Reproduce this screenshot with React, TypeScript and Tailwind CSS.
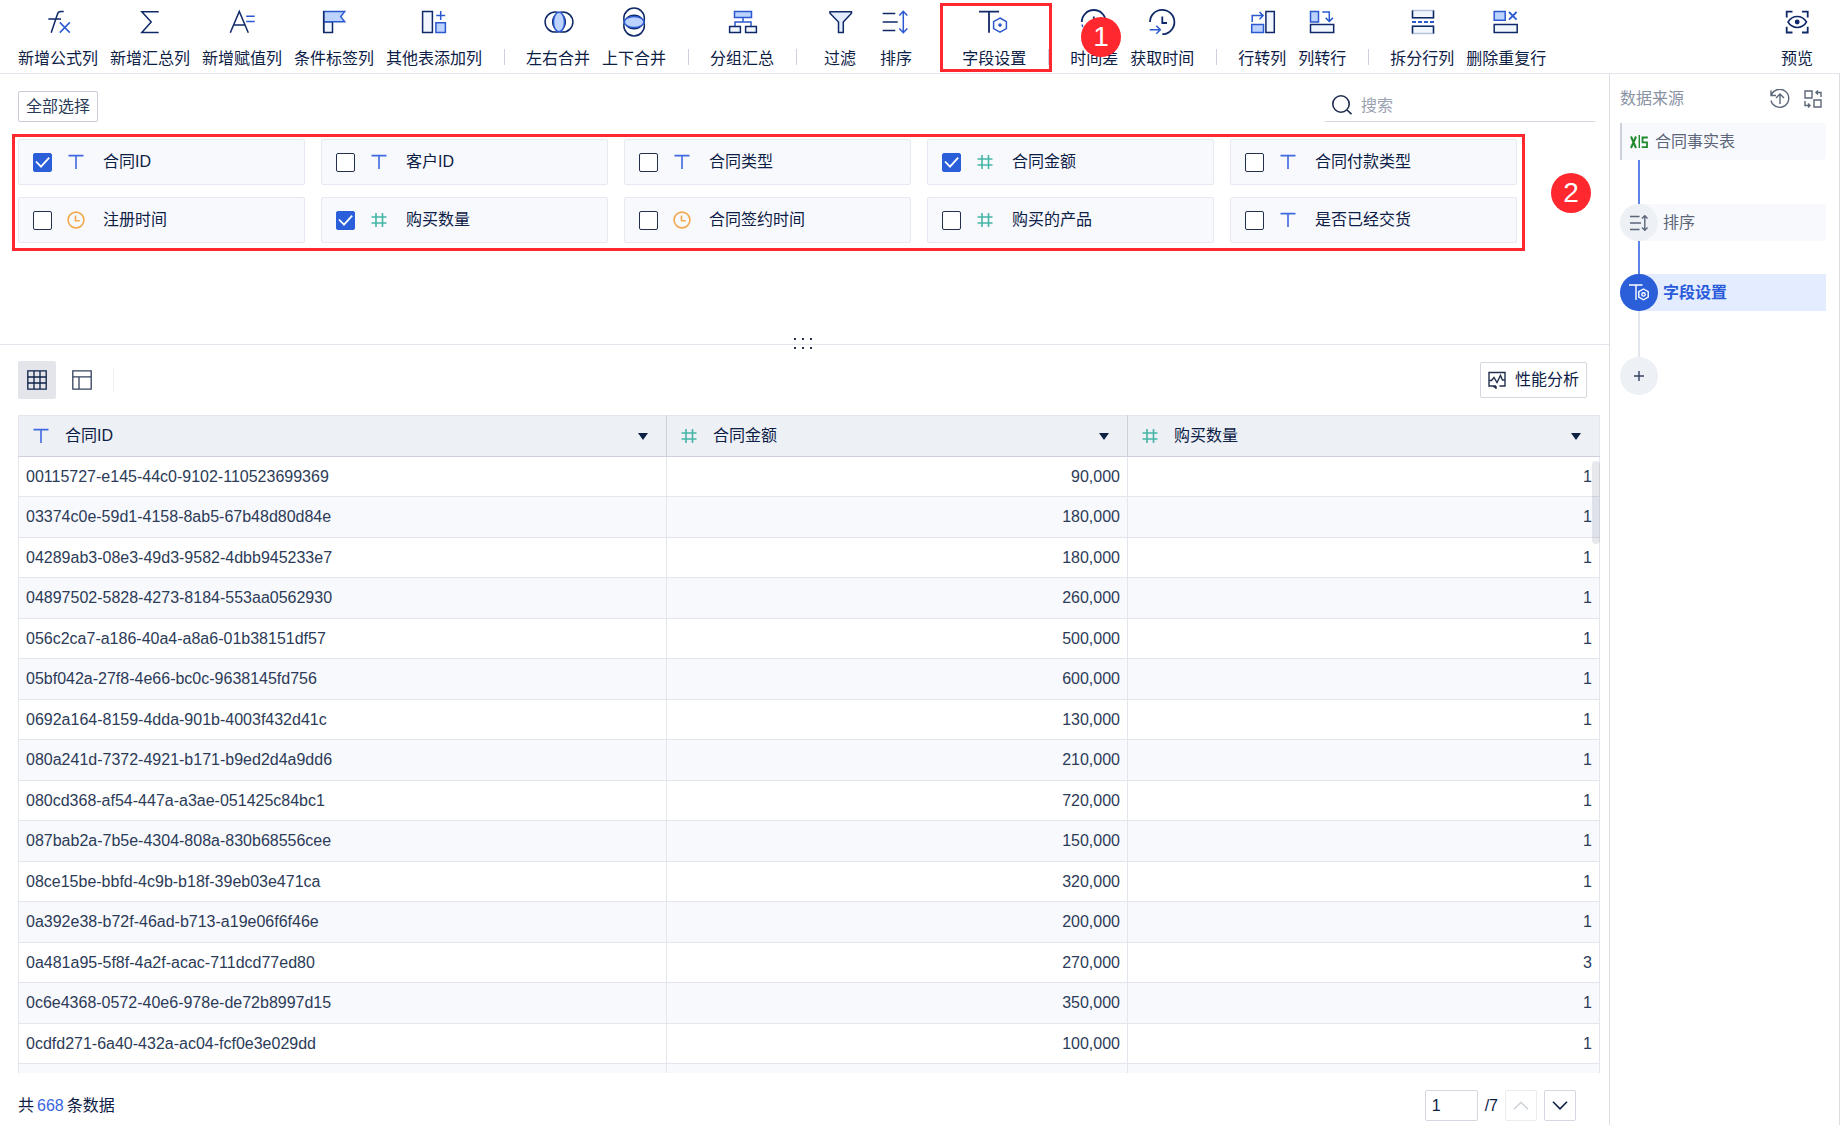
import { useState, type ReactNode } from "react";

const NAVY = "#0f2868";
const BLUE = "#2b59cf";
const SKY = "#bcd2ff";
const PALE = "#f1f6ff";

function Icon({ children }: { children: ReactNode }) {
  return (
    <svg
      viewBox="0 0 28 28"
      className="size-7 shrink-0 overflow-visible"
      fill="none"
      stroke={NAVY}
      strokeWidth="1.5"
      aria-hidden="true"
    >
      {children}
    </svg>
  );
}

const icons: Record<string, ReactNode> = {
  formula: (
    <>
      <path d="M19.7 3.6h-2.6c-2.2 0-3.3.9-3.8 2.9L7.2 24.7M4.3 11H17" />
      <path d="m15.8 14.4 10 10.2m0-10.2-10 10.2" stroke={BLUE} />
    </>
  ),
  sum: <path d="M22.7 3.7H5.8L15.2 14 5.8 24.5h16.9" />,
  assign: (
    <>
      <path d="m2.3 24.8 9-21.3 9 21.3M5.5 17h11.6" />
      <path d="M18.2 8.2h8.5m-8.5 5.3h8.5" stroke={BLUE} />
    </>
  ),
  flag: (
    <>
      <path d="M3.7 13.8h8.8v10.8H3.7z" fill={PALE} />
      <path d="M3.7 3.6h21l-4 5 4 5.1h-21z" fill={SKY} stroke={BLUE} />
      <path d="M3.7 3v21" />
    </>
  ),
  addColumn: (
    <>
      <path d="M2.6 3.6h9.8v20.9H2.6z" fill={PALE} />
      <path d="M15.9 14.7h9.5v9.8h-9.5z" fill={SKY} stroke={BLUE} />
      <path d="M20.7 3v9m-4.5-4.5h9" stroke={BLUE} />
    </>
  ),
  joinH: (
    <>
      <circle cx="11.2" cy="14" r="10.1" />
      <circle cx="18.8" cy="14" r="10.1" />
      <ellipse cx="15" cy="14" rx="5.5" ry="9.8" fill={SKY} stroke={BLUE} />
    </>
  ),
  joinV: (
    <>
      <circle cx="14.1" cy="10.4" r="10.3" />
      <circle cx="14.1" cy="17.6" r="10.3" />
      <ellipse cx="14.1" cy="14" rx="9.8" ry="5.5" fill={SKY} stroke={BLUE} />
    </>
  ),
  group: (
    <>
      <path d="M6.5 3.6h17v6h-17z" fill={SKY} stroke={BLUE} />
      <path d="M15 9.6V14M7 18v-4h16v4" stroke={BLUE} />
      <path d="M1.6 18.5h10.8v6H1.6zm16 0h10.8v6H17.6z" fill={PALE} />
    </>
  ),
  filter: <path d="M4 3.7h21.5v1.6l-8.2 8.8v10.3h-4.8V14.1L4 5.3z" fill="#e4edff" />,
  sort: (
    <>
      <path d="M.7 5.6h12.6M.7 14h15M.7 22.5h12.6" />
      <path d="M21.3 3.5v21m-4-17 4-4.2 4 4.2m-8 13 4 4.2 4-4.2" stroke={BLUE} />
    </>
  ),
  field: (
    <>
      <path d="M-1 3.6h20M9 3.6v21.2" strokeWidth="1.8" />
      <path d="m20 10 6.4 3.6v7L20 24.2l-6.4-3.6v-7z" stroke={BLUE} />
      <circle cx="20" cy="17.1" r="1.8" fill={BLUE} stroke="none" />
    </>
  ),
  timeDiff: (
    <>
      <path d="M1.8 14A12 12 0 0 1 25.8 14M13.8 26a12 12 0 0 0 12-12" strokeWidth="1.8" />
      <path d="M13.8 8.5V15h4.5" strokeWidth="1.8" />
      <path d="m2 16.5.8 2.500M4 21l2 2" stroke={BLUE} />
    </>
  ),
  getTime: (
    <>
      <path d="M2 14A12.2 12.2 0 1 1 14.3 26.2" strokeWidth="1.8" />
      <path d="M14.3 8.5V15H19" strokeWidth="1.8" />
      <path d="M1.7 21.7h10.6m-4-4 4 4-4 4" stroke={BLUE} />
    </>
  ),
  rowToCol: (
    <>
      <path d="M3.7 16.5h11.8v8H3.7z" fill={SKY} stroke={BLUE} />
      <path d="M17.9 3.6h8.4v20.9h-8.4z" fill={PALE} />
      <path d="M4.2 14V7.6H15M11.500 4l3.600 3.600-3.600 3.600" stroke={BLUE} />
    </>
  ),
  colToRow: (
    <>
      <path d="M2.5 3.6h8V14h-8z" fill={SKY} stroke={BLUE} />
      <path d="M2.5 16.5h23.2v8H2.5z" fill={PALE} />
      <path d="M14.3 4h7v9.5m-3.6-3.6 3.6 3.6 3.6-3.6" stroke={BLUE} />
    </>
  ),
  split: (
    <>
      <path d="M4.5 2.5h21v7.3h-21zm0 15.7h21v7.3h-21z" fill={PALE} stroke="#b9c4dc" />
      <path d="M4.5 2.5v7.3h21V2.5m-21 23v-7.3h21v7.3" />
      <path d="M4 14h22" stroke={BLUE} strokeWidth="1.8" strokeDasharray="4 2" />
    </>
  ),
  dedupe: (
    <>
      <path d="M2.2 3.6h11v8.7h-11z" fill={SKY} stroke={BLUE} />
      <path d="M2.2 16.4h23v8.1h-23z" fill={PALE} />
      <path d="m17 4 7.6 7.6m0-7.6L17 11.6" stroke={BLUE} strokeWidth="1.8" />
    </>
  ),
  preview: (
    <>
      <path
        d="M9.5 3.7H3.7v5.8M19 3.7h5.7v5.8M9.5 24.5H3.7v-5.7M19 24.5h5.7v-5.7"
        strokeWidth="1.8"
      />
      <path d="M5 14c4.5-7.3 14-7.3 18.5 0-4.5 7.3-14 7.3-18.5 0z" />
      <circle cx="14.2" cy="14" r="2.4" fill={NAVY} stroke="none" />
    </>
  ),
};

const toolGroups = [
  [
    { icon: "formula", label: "新增公式列" },
    { icon: "sum", label: "新增汇总列" },
    { icon: "assign", label: "新增赋值列" },
    { icon: "flag", label: "条件标签列" },
    { icon: "addColumn", label: "其他表添加列" },
  ],
  [
    { icon: "joinH", label: "左右合并" },
    { icon: "joinV", label: "上下合并" },
  ],
  [{ icon: "group", label: "分组汇总" }],
  [
    { icon: "filter", label: "过滤" },
    { icon: "sort", label: "排序" },
  ],
  [{ icon: "field", label: "字段设置" }],
  [
    { icon: "timeDiff", label: "时间差" },
    { icon: "getTime", label: "获取时间" },
  ],
  [
    { icon: "rowToCol", label: "行转列" },
    { icon: "colToRow", label: "列转行" },
  ],
  [
    { icon: "split", label: "拆分行列" },
    { icon: "dedupe", label: "删除重复行" },
  ],
];

type FieldType = "text" | "number" | "time";

const fields: { name: string; type: FieldType; checked: boolean }[] = [
  { name: "合同ID", type: "text", checked: true },
  { name: "客户ID", type: "text", checked: false },
  { name: "合同类型", type: "text", checked: false },
  { name: "合同金额", type: "number", checked: true },
  { name: "合同付款类型", type: "text", checked: false },
  { name: "注册时间", type: "time", checked: false },
  { name: "购买数量", type: "number", checked: true },
  { name: "合同签约时间", type: "time", checked: false },
  { name: "购买的产品", type: "number", checked: false },
  { name: "是否已经交货", type: "text", checked: false },
];

const rows = [
  ["00115727-e145-44c0-9102-110523699369", "90,000", "1"],
  ["03374c0e-59d1-4158-8ab5-67b48d80d84e", "180,000", "1"],
  ["04289ab3-08e3-49d3-9582-4dbb945233e7", "180,000", "1"],
  ["04897502-5828-4273-8184-553aa0562930", "260,000", "1"],
  ["056c2ca7-a186-40a4-a8a6-01b38151df57", "500,000", "1"],
  ["05bf042a-27f8-4e66-bc0c-9638145fd756", "600,000", "1"],
  ["0692a164-8159-4dda-901b-4003f432d41c", "130,000", "1"],
  ["080a241d-7372-4921-b171-b9ed2d4a9dd6", "210,000", "1"],
  ["080cd368-af54-447a-a3ae-051425c84bc1", "720,000", "1"],
  ["087bab2a-7b5e-4304-808a-830b68556cee", "150,000", "1"],
  ["08ce15be-bbfd-4c9b-b18f-39eb03e471ca", "320,000", "1"],
  ["0a392e38-b72f-46ad-b713-a19e06f6f46e", "200,000", "1"],
  ["0a481a95-5f8f-4a2f-acac-711dcd77ed80", "270,000", "3"],
  ["0c6e4368-0572-40e6-978e-de72b8997d15", "350,000", "1"],
  ["0cdfd271-6a40-432a-ac04-fcf0e3e029dd", "100,000", "1"],
  ["", "", ""],
];

function TypeIcon({ type }: { type: FieldType }) {
  return (
    <svg viewBox="0 0 18 18" className="size-[18px] shrink-0" fill="none" strokeWidth="1.6" aria-hidden="true">
      {type === "text" && <path d="M1.5 2.6h15M9 2.600V16" stroke="#4068e0" />}
      {type === "number" && <path d="M6 2v14m6.500-14v14m-11-10h15m-15 6h15" stroke="#45b5a5" />}
      {type === "time" && (
        <>
          <circle cx="9" cy="9" r="7.9" stroke="#f2a950" />
          <path d="M8.5 4.5v5.2h4.2" stroke="#f2a950" />
        </>
      )}
    </svg>
  );
}

function ToolButton({ icon, label }: { icon: string; label: string }) {
  return (
    <button className="flex min-w-11 shrink-0 flex-col items-center gap-[11px] whitespace-nowrap leading-6">
      <Icon>{icons[icon]}</Icon>
      {label}
    </button>
  );
}

function Badge({ children }: { children: ReactNode }) {
  return (
    <span className="flex size-10 items-center justify-center rounded-full bg-[#ff282e] text-[28px] leading-10 text-white">
      {children}
    </span>
  );
}

function Toolbar() {
  return (
    <header className="flex h-[74px] shrink-0 items-start gap-3 border-b border-[#e4e6ed] px-[18px] pt-2">
      {toolGroups.map((group, i) => (
        <div key={i} className="flex items-end gap-3">
          {i > 0 && (
            <div className="flex h-7 w-5 items-center justify-center">
              <div className="h-4 w-px bg-[#ccd1db]" />
            </div>
          )}
          {group.map((tool) => (
            <div key={tool.label} className="relative">
              <ToolButton {...tool} />
              {tool.icon === "field" && (
                <div className="pointer-events-none absolute -top-[5px] -right-[26px] -bottom-px -left-[22px] border-3 border-[#ff282e]" />
              )}
              {tool.icon === "timeDiff" && (
                <div className="pointer-events-none absolute top-[9px] left-[11px]">
                  <Badge>1</Badge>
                </div>
              )}
            </div>
          ))}
        </div>
      ))}
      <div className="mr-[3px] ml-auto">
        <ToolButton icon="preview" label="预览" />
      </div>
    </header>
  );
}

function FieldPicker() {
  const [checked, setChecked] = useState(fields.map((f) => f.checked));

  return (
    <section className="relative h-[271px] shrink-0 border-b border-[#e4e6ed] pt-[17px] pr-[14px] pl-[18px]">
      <div className="flex h-[31px] items-stretch justify-between">
        <button
          className="rounded-xs border border-[#c9cdd8] px-[7px] pt-px leading-7 text-[#2a3a57]"
          onClick={() => setChecked(fields.map(() => true))}
        >
          全部选择
        </button>
        <label className="flex w-[270px] items-center gap-2 border-b border-[#d5d8e0] pl-[6px]">
          <svg viewBox="0 0 22 22" className="size-[22px] shrink-0" fill="none" stroke="#1d2c4b" strokeWidth="1.6" aria-hidden="true">
            <circle cx="10" cy="9" r="8.2" />
            <path d="m16 15 4.5 4.2" />
          </svg>
          <input
            aria-label="搜索"
            placeholder="搜索"
            className="w-full bg-transparent leading-6 outline-none placeholder:text-[#9aa2b1]"
          />
        </label>
      </div>

      <div className="relative mt-[17px] grid grid-cols-[repeat(auto-fill,287px)] gap-x-4 gap-y-3">
        {fields.map((field, i) => (
          <label
            key={field.name}
            className="flex h-[46px] items-center rounded-xs border border-[#e6e9f1] bg-[#f8f9fd] pl-[14px]"
          >
            <span className="relative mr-[15px] size-[19px] shrink-0">
              <input
                type="checkbox"
                checked={checked[i]}
                onChange={() => setChecked(checked.map((c, j) => (j === i ? !c : c)))}
                className="peer block size-[19px] appearance-none rounded-xs border border-[#22304d] bg-white checked:border-[#2a5fd9] checked:bg-[#2a5fd9]"
              />
              <svg
                viewBox="0 0 19 19"
                className="pointer-events-none absolute inset-0 hidden peer-checked:block"
                fill="none"
                stroke="#fff"
                strokeWidth="1.8"
                aria-hidden="true"
              >
                <path d="m3 8.5 5 5.2 8.2-9" />
              </svg>
            </span>
            <TypeIcon type={field.type} />
            <span className="ml-[18px] leading-6">{field.name}</span>
          </label>
        ))}
        <div className="pointer-events-none absolute -top-[5px] -bottom-2 -left-[6px] w-[1513px] border-3 border-[#ff282e]" />
        <div className="pointer-events-none absolute top-[34px] left-[1533px]">
          <Badge>2</Badge>
        </div>
      </div>

      {/* Drag handle */}
      <svg
        viewBox="0 0 18 12"
        className="absolute -bottom-[5px] left-1/2 h-3 w-[18px] -translate-x-[11px]"
        fill="#22304d"
        aria-hidden="true"
      >
        {[0, 8, 16].map((x) => (
          <g key={x}>
            <rect x={x} y="1" width="2" height="2" />
            <rect x={x} y="10" width="2" height="2" />
          </g>
        ))}
      </svg>
    </section>
  );
}

function HeaderCell({ type, children }: { type: FieldType; children: ReactNode }) {
  return (
    <th className="h-[41px] border border-t-[#e4e6ed] border-r-[#ccd1db] border-b-[#ccd1db] border-l-[#ccd1db] bg-[#edf0f5] p-0 font-normal first:border-l-[#e4e6ed] last:border-r-[#e4e6ed]">
      <div className="flex items-center pr-[18px] pl-[13px] leading-6">
        <TypeIcon type={type} />
        <span className="ml-[15px]">{children}</span>
        <button className="ml-auto" aria-label="列菜单">
          <svg viewBox="0 0 10 7" className="h-[7px] w-[10px]" fill="#0c2046">
            <path d="M0 0h10L5 7z" />
          </svg>
        </button>
      </div>
    </th>
  );
}

function DataTable() {
  const cell = "border border-[#e4e6ed] px-[7px] py-0 text-[#2c3b58]";
  return (
    <div className="relative mr-[9px] ml-[18px] min-h-0 grow basis-0 overflow-hidden">
      <table className="w-full table-fixed border-collapse">
        <colgroup>
          <col />
          <col className="w-[461px]" />
          <col className="w-[472px]" />
        </colgroup>
        <thead>
          <tr>
            <HeaderCell type="text">合同ID</HeaderCell>
            <HeaderCell type="number">合同金额</HeaderCell>
            <HeaderCell type="number">购买数量</HeaderCell>
          </tr>
        </thead>
        <tbody>
          {rows.map(([id, amount, count], i) => (
            <tr key={i} className="odd:h-10 even:h-[41px] even:bg-[#f8f9fd]">
              <td className={cell}>{id}</td>
              <td className={`${cell} text-right`}>{amount}</td>
              <td className={`${cell} text-right`}>{count}</td>
            </tr>
          ))}
        </tbody>
      </table>
      <div className="absolute top-[46px] right-0 h-[83px] w-2 rounded-sm bg-[#0f1e3c]/10" />
    </div>
  );
}

function TableSection() {
  return (
    <section className="flex min-h-0 grow flex-col">
      <div className="flex h-[70px] shrink-0 items-center pr-[22px] pl-[18px]">
        <button aria-label="表格视图" className="flex size-[38px] items-center justify-center rounded-xs bg-[#e3e5ea]">
          <svg viewBox="0 0 20 20" className="size-5" fill="none" stroke="#0c2046" strokeWidth="1.3" aria-hidden="true">
            <path d="M.8.8h18.4v18.4H.8zM.8 7h18.4M.8 13h18.4M7 .8v18.4M13 .8v18.4" />
          </svg>
        </button>
        <button aria-label="结构视图" className="ml-4">
          <svg viewBox="0 0 20 20" className="size-5" fill="none" stroke="#33415c" strokeWidth="1.3" aria-hidden="true">
            <path d="M.8.8h18.4v18.4H.8zM.8 6.8h18.4M7 6.8v12.4" />
          </svg>
        </button>
        <div className="ml-[21px] h-6 w-px bg-[#eef0f4]" />
        <button className="ml-auto flex h-9 items-center gap-2 rounded-xs border border-[#d5d8e0] px-[7px] leading-6">
          <svg viewBox="0 0 18 18" className="mr-px size-[18px]" fill="none" stroke="#22304d" strokeWidth="1.4" aria-hidden="true">
            <path d="M8 15H1V1.5h16V15h-5.5M5 15l3 2.2V15" />
            <path d="M1 9.500h2.500L6 6.500l3 5 3.500-7 2 4.500H17" />
          </svg>
          性能分析
        </button>
      </div>

      <DataTable />

      <footer className="flex h-[52px] shrink-0 items-center pt-[13px] pr-[33px] pl-[18px]">
        <p className="flex gap-[3px] leading-6">
          共<span className="text-[#3a66e0]">668</span>
          <span>条数据</span>
        </p>
        <div className="ml-auto flex items-center">
          <input
            aria-label="页码"
            defaultValue="1"
            className="h-[31px] w-[53px] rounded-xs border border-[#d5d8e0] px-[6px] leading-6 outline-none"
          />
          <span className="mx-[7px] leading-6">/7</span>
          <button
            aria-label="上一页"
            disabled
            className="flex h-[31px] w-8 items-center justify-center rounded-xs border border-[#eaecf0] text-[#cfd4dc]"
          >
            <svg viewBox="0 0 16 9" className="h-[9px] w-4" fill="none" stroke="currentColor" strokeWidth="1.6">
              <path d="m1 8.3 7-7 7 7" />
            </svg>
          </button>
          <button
            aria-label="下一页"
            className="ml-[7px] flex h-[31px] w-8 items-center justify-center rounded-xs border border-[#d5d8e0]"
          >
            <svg viewBox="0 0 16 9" className="h-[9px] w-4" fill="none" stroke="currentColor" strokeWidth="1.6">
              <path d="m1 .8 7 7 7-7" />
            </svg>
          </button>
        </div>
      </footer>
    </section>
  );
}

function Sidebar() {
  return (
    <aside className="w-[231px] shrink-0 border-x border-[#dcdee4] pt-[13px] pr-[13px] pl-[10px] text-[#5b6679]">
      <div className="flex h-6 items-center text-[#8a93a5]">
        <h2 className="leading-6">数据来源</h2>
        <button aria-label="更新" className="ml-auto text-[#5b6679]">
          <svg viewBox="0 0 20 20" className="size-5" fill="none" stroke="currentColor" strokeWidth="1.4" aria-hidden="true">
            <path d="M1.2 6.500A9 9 0 1 1 1 11.500M1 1.500v5h5" />
            <path d="M10 15V5M6 9l4-4 4 4" />
          </svg>
        </button>
        <button aria-label="切换" className="mr-1 ml-[14px] text-[#5b6679]">
          <svg viewBox="0 0 18 18" className="size-[18px]" fill="none" stroke="currentColor" strokeWidth="1.4" aria-hidden="true">
            <path d="M1 1h7v7H1zm9 9h7v7h-7z" />
            <path d="M12 2.500h5v4.500M14 .5l-2 2 2 2M6 15.500H1V11m3 2.500 2 2-2 2" />
          </svg>
        </button>
      </div>

      <a
        href="#source"
        className="mt-3 flex h-[37px] items-center rounded-r-sm border-l-2 border-[#ccd0da] bg-[#f8f9fd] pl-2"
      >
        <svg viewBox="0 0 18 14" className="mr-[7px] h-[14px] w-[18px]" fill="none" stroke="#1f8a2c" strokeWidth="2" aria-hidden="true">
          <path d="m1 1.500 5 11.500M6 1.500 1 13" />
          <path d="M9.300 0v13" strokeWidth="1.4" />
          <path d="M17.800 2.500h-5.300v4.800h4.500v4.800h-5.300" strokeWidth="1.8" />
        </svg>
        <span className="leading-6">合同事实表</span>
      </a>
      <div className="ml-[18px] h-11 w-[2px] bg-[#5b84e8]" />

      <a href="#sort" className="flex h-[37px] items-center gap-[5px] rounded-r-sm rounded-l-full bg-[#f8f9fd]">
        <span className="flex h-[37px] w-[38px] items-center justify-center rounded-full bg-[#edf0f5]">
          <svg viewBox="0 0 18 16" className="h-4 w-[18px]" fill="none" stroke="currentColor" strokeWidth="1.4" aria-hidden="true">
            <path d="M0 1.5h9.5M0 8h11M0 14.5h9.5M14.800.8v14.400M12 3.500 14.800.7l2.800 2.800M12 12.500l2.800 2.800 2.800-2.800" />
          </svg>
        </span>
        <span className="leading-6">排序</span>
      </a>
      <div className="ml-[18px] h-[33px] w-[2px] bg-[#5b84e8]" />

      <a
        href="#fields"
        className="flex h-[37px] items-center gap-[5px] rounded-r-sm rounded-l-full bg-[#e4edff] text-[#2a5bdb]"
      >
        <span className="flex h-[37px] w-[38px] items-center justify-center rounded-full bg-[#2a5fd9]">
          <svg viewBox="0 0 20 17" className="h-[17px] w-5" fill="none" stroke="#fff" strokeWidth="1.4" aria-hidden="true">
            <path d="M0 1h13.5M7 1v15" />
            <path d="m14.5 5 4.7 2.7v5.4l-4.7 2.7-4.7-2.7V7.7z" />
            <circle cx="14.5" cy="10.4" r="1.7" />
          </svg>
        </span>
        <span className="font-semibold leading-6">字段设置</span>
      </a>
      <div className="ml-[18px] h-[46px] w-[2px] bg-[#e3e6ec]" />

      <button aria-label="添加步骤" className="flex size-[38px] items-center justify-center rounded-full bg-[#edf0f5]">
        <svg viewBox="0 0 10 10" className="size-[10px]" stroke="#33415c" strokeWidth="1.4" aria-hidden="true">
          <path d="M5 0v10M0 5h10" />
        </svg>
      </button>
    </aside>
  );
}

export default function App() {
  return (
    <div className="flex h-screen flex-col overflow-hidden bg-white font-['Liberation_Sans','Noto_Sans_CJK_SC',sans-serif] text-base text-[#0c2046]">
      <Toolbar />
      <div className="flex min-h-0 grow">
        <main className="flex min-w-0 grow flex-col">
          <FieldPicker />
          <TableSection />
        </main>
        <Sidebar />
      </div>
    </div>
  );
}
